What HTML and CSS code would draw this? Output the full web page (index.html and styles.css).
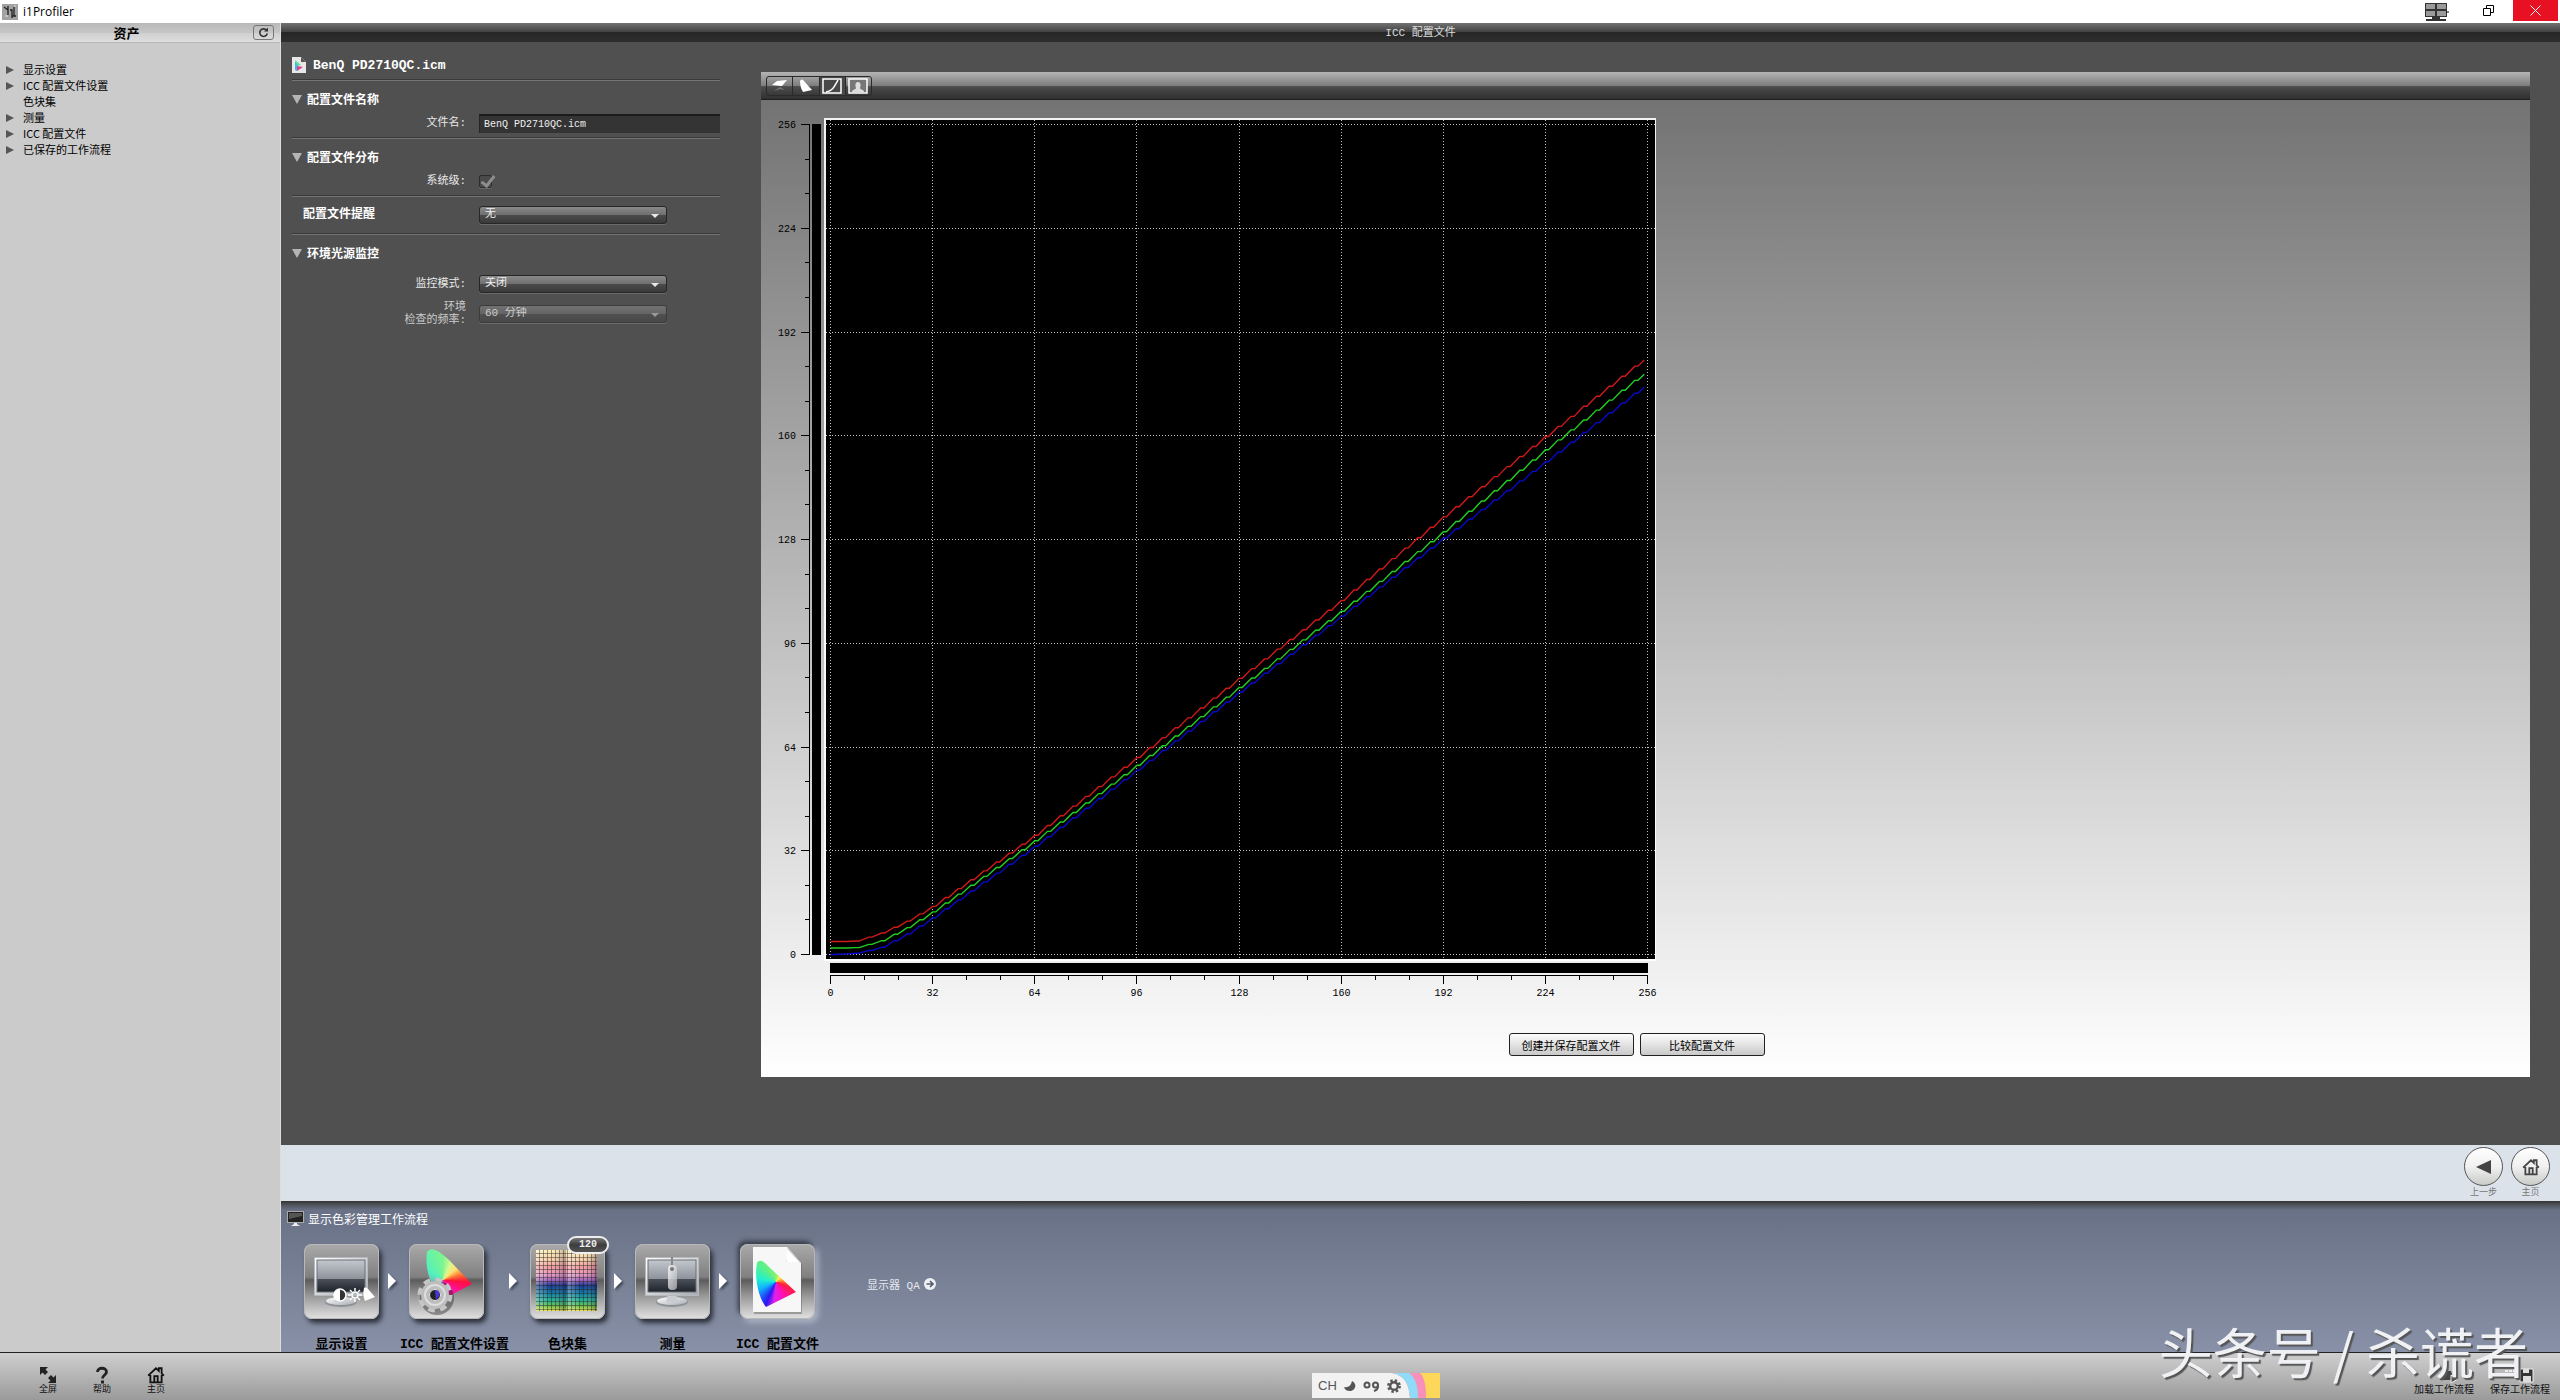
FILE: index.html
```html
<!DOCTYPE html>
<html lang="zh-CN">
<head>
  <meta charset="UTF-8" />
  <title>i1Profiler</title>
  <link rel="stylesheet" href="styles.css">
</head>
<body>

  <!-- shared gradients and symbols -->
  <svg class="defs" width="0" height="0" aria-hidden="true">
    <defs>
      <linearGradient id="metal" x1="0" y1="0" x2="1" y2="1">
        <stop offset="0" stop-color="#ffffff" />
        <stop offset="1" stop-color="#a9adb3" />
      </linearGradient>
      <linearGradient id="screen" x1="0" y1="0" x2="0" y2="1">
        <stop offset="0" stop-color="#c3c8cf" />
        <stop offset="0.58" stop-color="#8f949c" />
        <stop offset="0.6" stop-color="#4a5059" />
        <stop offset="1" stop-color="#1f242b" />
      </linearGradient>
      <linearGradient id="patches" x1="0" y1="0" x2="0" y2="1">
        <stop offset="0" stop-color="#fdf0b4" />
        <stop offset="0.16" stop-color="#f8cfa8" />
        <stop offset="0.28" stop-color="#f0989c" />
        <stop offset="0.4" stop-color="#e898c0" />
        <stop offset="0.5" stop-color="#9a5cb8" />
        <stop offset="0.58" stop-color="#16358f" />
        <stop offset="0.7" stop-color="#0c74a0" />
        <stop offset="0.82" stop-color="#1fb096" />
        <stop offset="0.92" stop-color="#62bb45" />
        <stop offset="1" stop-color="#f6ee4b" />
      </linearGradient>
      <linearGradient id="patch-shade" x1="0" y1="0" x2="1" y2="0">
        <stop offset="0" stop-color="#fff" stop-opacity="0.35" />
        <stop offset="0.5" stop-color="#fff" stop-opacity="0" />
        <stop offset="1" stop-color="#102" stop-opacity="0.3" />
      </linearGradient>
      <pattern id="patch-grid" x="6" y="6" width="4" height="4" patternUnits="userSpaceOnUse">
        <path d="M0 3.500H4M3.500 0V4" stroke="#222" stroke-opacity="0.45" fill="none" />
      </pattern>
      <symbol id="monitor" viewBox="0 0 54 50">
        <ellipse cx="27" cy="45" rx="16" ry="5" fill="#8d9197" />
        <ellipse cx="27" cy="44" rx="15" ry="4" fill="url(#metal)" />
        <path d="M23 37h8l2 8H21z" fill="#c9cdd2" />
        <rect x="0.5" y="0.5" width="53" height="38" fill="url(#metal)" stroke="#b5b9be" />
        <rect x="3" y="3" width="48" height="32" fill="url(#screen)" stroke="#6b7078" />
      </symbol>
      <symbol id="house" viewBox="0 0 16 16">
        <path d="M1 8.500L8 2l2.500 2.300V2H13v4.500l2 2M3 8v6.500h10V8M6.500 14.500V9h3v5.500" fill="none" stroke="currentColor" stroke-width="1.600" />
      </symbol>
    </defs>
  </svg>

  <header class="titlebar">
    <svg class="app-icon" width="16" height="16" viewBox="0 0 16 16">
      <rect width="16" height="16" fill="#a2a2a2" />
      <path d="M2 3l4 3M6 2v9M8 6h2v8M12 3v9M10 12h4" stroke="#222" stroke-width="1.300" fill="none" />
      <path d="M3 12h3M12 2h2" stroke="#ddd" />
    </svg>
    <span class="app-name">i1Profiler</span>
    <svg class="displays" width="24" height="19" viewBox="0 0 24 19">
      <rect x="0" y="1" width="22" height="14" fill="#333" />
      <path d="M1 2h9v5H1zM12 2h9v5h-9zM1 9h9v5H1zM12 9h9v5h-9z" fill="#9a9a9a" />
      <path d="M7 15h8v2h6v2H1v-2h6z" fill="#333" />
      <path d="M21 10h3" stroke="#000" />
    </svg>
    <button class="win-btn" aria-label="还原">
      <svg width="11" height="11" viewBox="0 0 11 11" fill="none" stroke="#000"><path d="M0.500 3.500h7v7h-7zM3.500 3v-2.500h7v7H8" /></svg>
    </button>
    <button class="win-btn close" aria-label="关闭">
      <svg width="11" height="11" viewBox="0 0 11 11" stroke="#fff"><path d="M0.500 0.500l10 10M10.500 0.500l-10 10" /></svg>
    </button>
  </header>

  <div class="workspace">
    <aside class="sidebar">
      <div class="sidebar-head">
        <h2>资产</h2>
        <button class="refresh" aria-label="刷新">
          <svg width="11" height="11" viewBox="0 0 11 11"><path d="M8.500 3.200A3.800 3.800 0 1 0 9.300 6.500" fill="none" stroke="#333" stroke-width="1.600" /><path d="M6 4.500h4V0.500z" fill="#333" /></svg>
        </button>
      </div>
      <ul class="assets">
        <li class="branch">显示设置</li>
        <li class="branch">ICC 配置文件设置</li>
        <li>色块集</li>
        <li class="branch">测量</li>
        <li class="branch">ICC 配置文件</li>
        <li class="branch">已保存的工作流程</li>
      </ul>
    </aside>

    <main class="main">
      <h1 class="main-head">ICC 配置文件</h1>

      <div class="main-body">
        <form class="props">
          <div class="profile-title">
            <svg width="14" height="16" viewBox="0 0 14 16">
              <path d="M0 0h9l5 5v11H0z" fill="#e8e8e8" />
              <path d="M9 0v5h5z" fill="#555" />
              <path d="M3 3l6 5-4 1z" fill="#5fe08a" />
              <path d="M3 4l3 5-1 5-2-1z" fill="#39b9e8" />
              <path d="M5 9l6 1-6 4z" fill="#e83a8c" />
            </svg>
            <span>BenQ PD2710QC.icm</span>
          </div>

          <section class="group">
            <h3 class="open">配置文件名称</h3>
            <div class="field">
              <label for="filename">文件名:</label>
              <input type="text" id="filename" value="BenQ PD2710QC.icm" />
            </div>
          </section>

          <section class="group">
            <h3 class="open">配置文件分布</h3>
            <div class="field">
              <label for="system">系统级:</label>
              <input type="checkbox" id="system" checked disabled />
            </div>
          </section>

          <section class="group reminder">
            <label class="heading" for="remind">配置文件提醒</label>
            <div class="dropdown">
              <select id="remind"><option>无</option></select>
            </div>
          </section>

          <section class="group ambient">
            <h3 class="open">环境光源监控</h3>
            <div class="field">
              <label for="mode">监控模式:</label>
              <div class="dropdown"><select id="mode"><option>关闭</option></select></div>
            </div>
            <div class="field two-line">
              <label for="rate">环境<br>检查的频率:</label>
              <div class="dropdown off"><select id="rate" disabled><option>60 分钟</option></select></div>
            </div>
          </section>
        </form>

        <section class="panel">
          <div class="panel-bar">
            <div class="views">
              <button aria-label="色域 3D">
                <svg width="18" height="16" viewBox="0 0 18 16"><path d="M1 7l5-4 10-1-5 6z" fill="#fff" /><path d="M3 13l6-4 5 3-5-1z" fill="#777" /></svg>
              </button>
              <button aria-label="色域 2D">
                <svg width="18" height="16" viewBox="0 0 18 16"><path d="M3 3c1-2 2-2 4 0l8 9-9 2C4 11 3 7 3 3z" fill="#fff" /></svg>
              </button>
              <button class="active" aria-label="曲线">
                <svg width="20" height="16" viewBox="0 0 20 16" fill="none" stroke="#fff"><path d="M1 1h18v14H1z" stroke-width="1.500" /><path d="M4 14c6-1 7-3 12-12" stroke-width="1.500" /></svg>
              </button>
              <button aria-label="图像">
                <svg width="20" height="16" viewBox="0 0 20 16"><path d="M1 1h18v14H1z" fill="#777" stroke="#fff" stroke-width="1.500" /><path d="M4 14c0-3 4-2 4-4-3-8 7-8 4 0 0 2 4 1 4 4z" fill="#ddd" /></svg>
              </button>
            </div>
          </div>

          <svg class="chart" width="930" height="900" viewBox="0 0 930 900" role="img" aria-label="色调曲线">
            <rect x="63" y="18" width="832" height="843" class="plot-edge" />
            <rect x="65" y="20" width="829" height="839" />
            <rect x="51" y="24" width="9" height="831" />
            <rect x="69" y="863" width="818" height="10" />
            <g id="grid"></g>
            <g id="axes"></g>
            <g id="curves"></g>
          </svg>

          <div class="actions">
            <button>创建并保存配置文件</button>
            <button>比较配置文件</button>
          </div>
        </section>
      </div>

      <nav class="step-nav">
        <button>
          <span class="disc"><svg width="16" height="16" viewBox="0 0 16 16"><path d="M0 8L15 1v14z" fill="#444" /></svg></span>
          上一步
        </button>
        <button>
          <span class="disc"><svg width="18" height="18"><use href="#house" /></svg></span>
          主页
        </button>
      </nav>

      <section class="workflow">
        <h2>
          <svg width="17" height="16" viewBox="0 0 17 16"><rect x="0.500" y="0.500" width="16" height="11" fill="#222" stroke="#aaa" /><path d="M2 2h13v3L2 8z" fill="#555" /><path d="M7 12h3v1l3 2H4l3-2z" fill="#eee" /></svg>
          显示色彩管理工作流程
        </h2>
        <div class="steps">
          <div class="step">
            <button class="tile" aria-label="显示设置">
              <svg width="75" height="75" viewBox="0 0 75 75">
                <use href="#monitor" x="10" y="13" width="54" height="50" />
                <circle cx="36" cy="51" r="6" fill="#333" stroke="#fff" stroke-width="1.500" />
                <path d="M36 45a6 6 0 0 0 0 12z" fill="#fff" />
                <circle cx="51" cy="51" r="3" fill="none" stroke="#fff" stroke-width="1.500" />
                <path d="M51 44v3M51 55v3M44 51h3M55 51h3M46 46l2 2M54 54l2 2M56 46l-2 2M46 56l2-2" stroke="#fff" stroke-width="1.500" />
                <path d="M60 44c2-1 3 0 4 1l7 8-10 4c-2-4-2-9-1-13z" fill="#fff" />
              </svg>
            </button>
            <span>显示设置</span>
          </div>
          <i class="next"></i>
          <div class="step wide">
            <button class="tile" aria-label="ICC 配置文件设置">
              <span class="gamut small"></span>
              <svg class="over" width="75" height="75" viewBox="0 0 75 75">
                <circle cx="28" cy="54" r="17" fill="#000" opacity="0.350" />
                <circle cx="26" cy="51" r="15" fill="none" stroke="#c6c6c6" stroke-width="5" stroke-dasharray="6.500 5.280" />
                <circle cx="26" cy="51" r="10" fill="none" stroke="#bdbdbd" stroke-width="8" />
                <circle cx="26" cy="51" r="10" fill="none" stroke="#dedede" stroke-width="2" />
                <circle cx="26" cy="51" r="5.500" fill="#222" stroke="#eee" />
                <path d="M26 46c4 0 5 3 4 6l-3 4z" fill="#4436d8" />
              </svg>
            </button>
            <span>ICC 配置文件设置</span>
          </div>
          <i class="next"></i>
          <div class="step">
            <button class="tile" aria-label="色块集">
              <svg width="75" height="75" viewBox="0 0 75 75">
                <rect x="6" y="6" width="61" height="61" fill="url(#patches)" />
                <rect x="6" y="6" width="30" height="61" fill="url(#patch-shade)" />
                <rect x="37" y="6" width="30" height="61" fill="url(#patch-shade)" />
                <rect x="6" y="6" width="61" height="61" fill="url(#patch-grid)" />
              </svg>
              <span class="count">120</span>
            </button>
            <span>色块集</span>
          </div>
          <i class="next"></i>
          <div class="step">
            <button class="tile" aria-label="测量">
              <svg width="75" height="75" viewBox="0 0 75 75">
                <use href="#monitor" x="10" y="13" width="54" height="50" />
                <path d="M37 13v9" stroke="#888" stroke-width="2" />
                <rect x="33" y="21" width="9" height="25" rx="4" fill="url(#metal)" opacity="0.800" />
                <circle cx="37" cy="25" r="2" fill="#777" />
              </svg>
            </button>
            <span>测量</span>
          </div>
          <i class="next"></i>
          <div class="step">
            <button class="tile current" aria-label="ICC 配置文件">
              <svg width="75" height="75" viewBox="0 0 75 75">
                <path d="M14 5h34l14 15v50H14z" fill="#666" opacity="0.500" />
                <path d="M13 3h34l14 16v49H13z" fill="#f7f7f7" />
                <path d="M47 3c2 6 1 11-1 15 6-2 11-1 15 1z" fill="#d4d4d4" />
                <path d="M47 5v13h12z" fill="#fff" />
              </svg>
              <span class="gamut"></span>
            </button>
            <span>ICC 配置文件</span>
          </div>
          <a class="qa" href="#">显示器 QA
            <svg width="12" height="12" viewBox="0 0 12 12"><circle cx="6" cy="6" r="6" fill="#eef0f3" /><path d="M2.500 6h6M6 3l3 3-3 3" fill="none" stroke="#555c6b" stroke-width="1.700" /></svg>
          </a>
        </div>
      </section>
    </main>
  </div>

  <footer class="footer">
    <button>
      <svg width="18" height="18" viewBox="0 0 18 18" fill="#222"><path d="M1 1h8L6.500 3.500l2.500 2.500-3 3-2.500-2.500L1 9zM17 17H9l2.500-2.500L9 12l3-3 2.500 2.500L17 9z" /></svg>
      全屏
    </button>
    <button>
      <svg width="18" height="18" viewBox="0 0 18 18"><path d="M4.500 6c0-5 9-5 9 0 0 3-4 3-4 6.500" fill="none" stroke="#222" stroke-width="2.800" /><rect x="8" y="14.500" width="3" height="3" fill="#222" /></svg>
      帮助
    </button>
    <button>
      <svg width="18" height="18"><use href="#house" /></svg>
      主页
    </button>

    <div class="ime">
      <span>CH</span>
      <svg width="12" height="12" viewBox="0 0 12 12"><path d="M0 7c4 1 7-1 8-6 6 3 3 10-2 10-3 0-5-1-6-4z" fill="#555" /></svg>
      <svg width="17" height="12" viewBox="0 0 17 12" fill="none" stroke="#555" stroke-width="2"><circle cx="4" cy="5" r="2.500" /><circle cx="12.500" cy="5" r="2.500" /><path d="M15 5c0 4-1 5-4 6" /></svg>
      <svg width="14" height="14" viewBox="0 0 14 14" fill="none" stroke="#555"><circle cx="7" cy="7" r="3.800" stroke-width="2.400" /><circle cx="7" cy="7" r="5.700" stroke-width="2.400" stroke-dasharray="2.400 2.080" /></svg>
      <svg class="rainbow" width="48" height="25" viewBox="0 0 48 25">
        <path d="M0 0h48v25H18C17 10 12 2 0 0z" fill="#fdd75a" />
        <path d="M0 0h28c5 5 6 14 6 25H18C17 10 12 2 0 0z" fill="#f98fbb" />
        <path d="M0 0h17c7 5 9 14 9 25h-8C17 10 12 2 0 0z" fill="#8fdcfa" />
      </svg>
    </div>

    <button class="file-btn first">
      <svg width="32" height="16" viewBox="0 0 32 16"><path d="M1 3h12M1 6h6" stroke="#eee" stroke-width="2" stroke-dasharray="3 1" /><path d="M12 12l3-9h8l3 9z" fill="#444" /><path d="M23 7l7 4-7 4z" fill="#555" stroke="#eee" /></svg>
      加载工作流程
    </button>
    <button class="file-btn">
      <svg width="32" height="16" viewBox="0 0 32 16"><path d="M1 3h12" stroke="#eee" stroke-width="2" stroke-dasharray="3 1" /><path d="M16 1h13v13H16z" fill="#333" stroke="#eee" /><path d="M19 1h6v4h-6zM19 8h8v6h-8z" fill="#ddd" /></svg>
      保存工作流程
    </button>
  </footer>

  <div class="watermark">头条号 / 杀谎者</div>

  <script>
    const SVG = 'http://www.w3.org/2000/svg';
    const grid = document.getElementById('grid');
    const axes = document.getElementById('axes');
    const curves = document.getElementById('curves');

    // level 0..256 -> chart coordinates
    const px = v => 69.5 + v * 817 / 256;
    const py = v => 854.5 - v * 830 / 256;

    function line(parent, x1, y1, x2, y2) {
      const el = document.createElementNS(SVG, 'path');
      el.setAttribute('d', `M${x1} ${y1}L${x2} ${y2}`);
      parent.appendChild(el);
    }

    function label(text, x, y, cls) {
      const el = document.createElementNS(SVG, 'text');
      el.textContent = text;
      el.setAttribute('x', x);
      el.setAttribute('y', y);
      el.setAttribute('class', cls);
      axes.appendChild(el);
    }

    line(axes, 48.5, 24, 48.5, 855);
    line(axes, 69, 875.5, 887, 875.5);
    for (let i = 0; i <= 24; i++) {
      const v = i * 32 / 3;
      const major = i % 3 === 0;
      const x = Math.floor(px(v)) + 0.5;
      const y = Math.floor(py(v)) + 0.5;
      line(axes, major ? 40 : 44, y, 48, y);
      line(axes, x, 876, x, major ? 884 : 880);
      if (major) {
        line(grid, x, 20, x, 859);
        line(grid, 65, y, 894, y);
        label(Math.round(v), 35, y + 3, 'tick-y');
        label(Math.round(v), x, 896, 'tick-x');
      }
    }

    const stops = [0, 8, 16, 24, 32, 64, 96, 128, 160, 192, 224, 255];
    const channels = {
      blue: [0, 0.3, 2, 6, 11, 33, 56.5, 80.5, 104, 128, 151.6, 175],
      green: [2, 2, 4, 8, 12.8, 34.7, 58, 82, 105.5, 130, 155.3, 179],
      red: [4, 4, 6.4, 10, 14.5, 36.4, 60.4, 84.8, 108.8, 134.6, 159.4, 183.4]
    };

    function at(values, v) {
      let i = 1;
      while (stops[i] < v) i++;
      const t = (v - stops[i - 1]) / (stops[i] - stops[i - 1]);
      return values[i - 1] + t * (values[i] - values[i - 1]);
    }

    for (const name in channels) {
      const points = [];
      for (let v = 0; v < 255; v += 4) {
        const y = py(at(channels[name], v + 0.5));
        points.push(`${px(v)},${y}`, `${px(v + 1)},${y}`);
      }
      points.push(`${px(255)},${py(at(channels[name], 255))}`);
      const el = document.createElementNS(SVG, 'polyline');
      el.setAttribute('points', points.join(' '));
      el.setAttribute('class', name);
      curves.appendChild(el);
    }
  </script>
</body>
</html>
```

FILE: styles.css
```css
* {
  box-sizing: border-box;
}

body {
  margin: 0;
  min-height: 100vh;
  display: flex;
  flex-direction: column;
  position: relative;
  font-family: "Liberation Mono", "Noto Sans CJK SC", monospace;
  font-size: 11px;
  background: #505050;
}

h1,
h2,
h3,
ul {
  margin: 0;
  padding: 0;
}

button {
  font: inherit;
  padding: 0;
  border: none;
  background: none;
  cursor: pointer;
}

svg {
  display: block;
  flex: none;
}

.defs {
  position: absolute;
}

/* window title */
.titlebar {
  display: flex;
  align-items: center;
  height: 23px;
  padding: 0 2px;
  background: #fff;
}

.app-name {
  flex: 1;
  margin-left: 5px;
  font-family: "Open Sans", sans-serif;
  font-size: 12px;
}

.displays {
  margin-right: 14px;
}

.win-btn {
  display: flex;
  align-items: center;
  justify-content: center;
  align-self: flex-start;
  width: 50px;
  height: 21px;
}

.win-btn.close {
  width: 45px;
  background: #e81123;
}

.workspace {
  flex: 1;
  display: flex;
}

/* assets */
.sidebar {
  width: 281px;
  background: #cbcbcb;
  border-right: 1px solid #ddd;
  font-family: "Noto Sans CJK SC", sans-serif;
}

.sidebar-head {
  display: flex;
  align-items: center;
  height: 20px;
  padding-right: 6px;
  background: linear-gradient(#b8b8b8 0%, #c6c6c6 50%, #cfcfcf 50%, #dedede 100%);
  border-bottom: 1px solid #b8b8b8;
}

.sidebar-head h2 {
  flex: 1;
  font-size: 13px;
  line-height: 18px;
  text-align: center;
}

.refresh {
  display: flex;
  align-items: center;
  justify-content: center;
  width: 21px;
  height: 15px;
  border: 1px solid #777;
  border-radius: 3px;
}

.assets {
  list-style: none;
  padding: 18px 0 0 23px;
}

.assets li {
  line-height: 16px;
  position: relative;
}

.assets .branch::before {
  content: "";
  position: absolute;
  left: -17px;
  top: 5px;
  border: 4px solid transparent;
  border-left: 8px solid #555;
  border-right: none;
}

/* main column */
.main {
  flex: 1;
  display: flex;
  flex-direction: column;
  min-width: 0;
}

.main-head {
  height: 19px;
  line-height: 20px;
  font-size: 11px;
  font-weight: normal;
  text-align: center;
  color: #ddd;
  background: linear-gradient(#727272 0%, #444 45%, #262626 50%, #2e2e2e 100%);
}

.main-body {
  flex: 1;
  display: flex;
  gap: 41px;
  padding: 0 30px 0 11px;
  background: #505050;
}

.props {
  width: 428px;
  color: #e8e8e8;
}

.profile-title {
  display: flex;
  align-items: center;
  gap: 7px;
  height: 37px;
  padding-top: 9px;
  font-size: 13px;
  font-weight: bold;
  color: #fff;
}

.group {
  height: 58px;
  padding-top: 13px;
  border-top: 1px solid #3a3a3a;
  box-shadow: inset 0 1px #747474;
}

.group h3,
.heading {
  font-size: 12px;
  line-height: 16px;
  font-weight: bold;
  color: #fff;
}

.open::before {
  content: "";
  display: inline-block;
  margin-right: 5px;
  border: 5px solid transparent;
  border-top: 9px solid #b5b5b5;
  border-bottom: none;
}

.field {
  display: flex;
  align-items: center;
  height: 20px;
  margin-top: 4px;
}

.field label {
  width: 174px;
  margin-right: 13px;
  text-align: right;
  line-height: 13px;
}

.field input[type="text"] {
  width: 241px;
  height: 19px;
  padding: 0 4px;
  border: none;
  border-top: 2px solid #1c1c1c;
  border-left: 1px solid #262626;
  font-family: inherit;
  font-size: 10px;
  color: #f0f0f0;
  background: #343434;
}

.field input[type="checkbox"] {
  appearance: none;
  position: relative;
  width: 13px;
  height: 13px;
  margin: 0;
  border: 1px solid #2c2c2c;
  border-radius: 2px;
  background: #4a4a4a;
  box-shadow: 0 1px #6a6a6a;
}

.field input[type="checkbox"]:checked::after {
  content: "";
  position: absolute;
  left: 4px;
  top: -3px;
  width: 5px;
  height: 11px;
  border: solid #8e8e8e;
  border-width: 0 3px 3px 0;
  transform: rotate(38deg);
}

.group.reminder {
  display: flex;
  height: 38px;
  padding: 10px 0 0 11px;
}

.reminder .heading {
  width: 176px;
  line-height: 18px;
}

.dropdown {
  position: relative;
  width: 188px;
  height: 18px;
}

.dropdown::after {
  content: "";
  position: absolute;
  right: 8px;
  top: 8px;
  border: 4px solid transparent;
  border-top-color: #e8e8e8;
  border-bottom: none;
  pointer-events: none;
}

.dropdown select {
  appearance: none;
  display: block;
  width: 100%;
  height: 100%;
  padding: 0 5px 3px;
  border: 1px solid #262626;
  border-radius: 3px;
  font-family: inherit;
  font-size: 11px;
  color: #f0f0f0;
  background: linear-gradient(#8a8a8a 0%, #6e6e6e 50%, #4b4b4b 50%, #3a3a3a 100%);
  box-shadow: 0 1px #6a6a6a;
}

.dropdown select:disabled {
  opacity: 1;
  color: #ccc;
  border-color: #3c3c3c;
  background: linear-gradient(#727272 0%, #646464 50%, #505050 50%, #484848 100%);
}

.dropdown.off::after {
  border-top-color: #999;
}

.ambient .field {
  margin-top: 11px;
}

.ambient .two-line {
  margin-top: 10px;
}

.two-line label {
  color: #ccc;
}

/* chart panel */
.panel {
  flex: 1;
  display: flex;
  flex-direction: column;
  margin: 30px 0 68px;
  background: linear-gradient(#6f6f6f, #fff);
}

.panel-bar {
  height: 28px;
  padding: 4px 5px;
  background: linear-gradient(#b4b4b4 0%, #7c7c7c 50%, #4c4c4c 52%, #303030 96%, #111 100%);
}

.views {
  display: flex;
  width: 106px;
  height: 20px;
  border: 1px solid #2a2a2a;
  border-radius: 3px;
}

.views button {
  flex: 1;
  display: flex;
  align-items: center;
  justify-content: center;
}

.views button + button {
  border-left: 1px solid #2a2a2a;
}

.views .active {
  background: #484848;
}

.plot-edge {
  fill: rgba(255, 255, 255, 0.9);
}

#axes path {
  stroke: #000;
}

#axes text {
  font-size: 10px;
  fill: #000;
}

.tick-y {
  text-anchor: end;
}

.tick-x {
  text-anchor: middle;
}

#grid path {
  stroke: #c4c4c4;
  stroke-dasharray: 1 2;
}

#curves {
  fill: none;
  stroke-width: 1.4;
}

.red {
  stroke: #d01818;
}

.green {
  stroke: #20d020;
}

.blue {
  stroke: #0808c8;
}

.actions {
  display: flex;
  justify-content: center;
  gap: 6px;
  margin-top: 33px;
  padding-right: 18px;
}

.actions button {
  width: 125px;
  height: 23px;
  border: 1px solid #222;
  border-radius: 3px;
  background: linear-gradient(#fdfdfd, #c9c9c9);
}

/* back / home strip */
.step-nav {
  display: flex;
  justify-content: flex-end;
  gap: 8px;
  height: 56px;
  padding: 2px 10px 0 0;
  background: #dce2ea;
}

.step-nav button {
  width: 39px;
  font-size: 9px;
  line-height: 14px;
  color: #777;
  display: flex;
  flex-direction: column;
  align-items: center;
}

.disc {
  display: flex;
  align-items: center;
  justify-content: center;
  width: 39px;
  height: 39px;
  border: 1px solid #555;
  border-radius: 50%;
  color: #444;
  background: linear-gradient(#fff, #f0f0f0 50%, #c8ccc8);
}

/* workflow */
.workflow {
  height: 151px;
  padding: 9px 0 0 6px;
  background: linear-gradient(#333 0, #50545c 4px, rgba(104, 112, 132, 0) 9px), linear-gradient(#676f84, #8891a7);
}

.workflow h2 {
  display: flex;
  align-items: center;
  gap: 4px;
  height: 18px;
  font-size: 12px;
  font-weight: normal;
  color: #fff;
}

.steps {
  display: flex;
  padding: 16px 0 0 17px;
}

.step {
  width: 75px;
  display: flex;
  flex-direction: column;
  font-size: 13px;
  font-weight: bold;
}

.step.wide {
  width: 91px;
}

.step > span {
  display: flex;
  justify-content: center;
  margin-top: 17px;
  line-height: 18px;
  white-space: pre;
}

.tile {
  position: relative;
  width: 75px;
  height: 75px;
  border-radius: 8px;
  background: linear-gradient(#aaa 0%, #808080 44%, #5c5c5c 48%, #9a9a9a 70%, #e2e2e2 100%);
  box-shadow: inset 0 0 0 1px #b8b8b8, 3px 4px 5px #2c303a;
}

.tile.current {
  box-shadow: inset 0 0 0 1px #b8b8b8, -2px -3px 5px #333844, 3px 3px 6px #b4bccd;
}

.over {
  position: relative;
}

.gamut {
  position: absolute;
  left: 0;
  top: 0;
  width: 75px;
  height: 75px;
  clip-path: path("M17 19C19 15 24 17 28 22L56 48L26 63C19 55 14 34 17 19Z");
  background: conic-gradient(from 0deg at 36px 38px, #8cf36a 0deg, #fff05a 40deg, #ff8a30 80deg, #ff1e3c 110deg, #ff10b0 150deg, #e020f0 185deg, #2818f0 205deg, #10b0ff 245deg, #20f0d0 280deg, #5cf08a 320deg, #8cf36a 360deg);
}

.gamut.small {
  clip-path: path("M18 8C22 1 32 8 40 16L63 40L40 52L22 38C17 26 17 16 18 8Z");
  background: conic-gradient(from 0deg at 34px 36px, #7cf590 0deg, #d8f890 25deg, #ffe070 50deg, #ff7030 75deg, #ff1040 95deg, #ff10a0 130deg, #50f0c0 300deg, #7cf590 360deg);
}

.count {
  position: absolute;
  right: -4px;
  top: -8px;
  width: 42px;
  height: 18px;
  border: 2px solid #eee;
  border-radius: 9px;
  font-size: 10px;
  line-height: 14px;
  color: #eee;
  background: linear-gradient(#777, #3c3c3c 50%, #555);
}

.next {
  width: 30px;
  padding: 29px 0 0 9px;
}

.next::before {
  content: "";
  display: block;
  width: 0;
  border: 8px solid transparent;
  border-left-color: #fff;
  border-right: none;
  filter: drop-shadow(2px 2px 1px #444b5c);
}

.qa {
  display: flex;
  align-items: center;
  gap: 4px;
  height: 80px;
  margin-left: 52px;
  color: #e6e9ef;
  text-decoration: none;
}

/* bottom bar */
.footer {
  position: relative;
  display: flex;
  height: 48px;
  padding: 13px 2px 0 21px;
  border-top: 1px solid #222;
  background: linear-gradient(#cfcfcf, #9a9a9a);
}

.footer button {
  display: flex;
  flex-direction: column;
  align-items: center;
  width: 54px;
  font-size: 9px;
  line-height: 13px;
  color: #111;
}

.footer .file-btn {
  width: 76px;
  padding-top: 2px;
  font-size: 10px;
}

.footer .first {
  margin-left: auto;
}

.ime {
  position: absolute;
  left: 1312px;
  bottom: 2px;
  display: flex;
  align-items: center;
  gap: 7px;
  height: 25px;
  padding-left: 6px;
  font-family: "Liberation Sans", sans-serif;
  font-size: 13px;
  color: #555;
  background: #f2f2f2;
}

.rainbow {
  margin-left: -16px;
}

.watermark {
  position: absolute;
  right: 32px;
  bottom: 12px;
  font-family: "Noto Sans CJK SC", sans-serif;
  font-size: 54px;
  line-height: 74px;
  color: #f0f1f4;
  text-shadow: 2px 2px 1px #555;
  pointer-events: none;
}
```
